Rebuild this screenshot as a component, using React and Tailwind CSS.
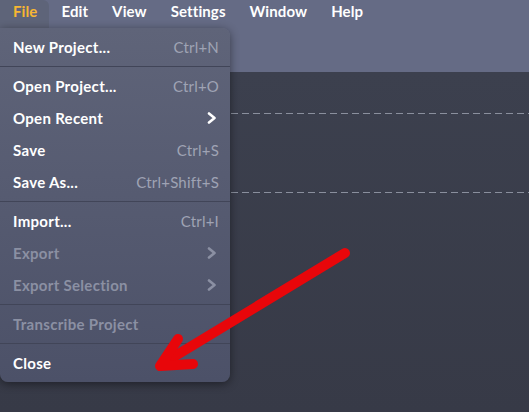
import React from 'react';

const menuBar = ['File', 'Edit', 'View', 'Settings', 'Window', 'Help'];

const items = [
  { label: 'New Project...', shortcut: 'Ctrl+N' },
  'sep',
  { label: 'Open Project...', shortcut: 'Ctrl+O' },
  { label: 'Open Recent', sub: true },
  { label: 'Save', shortcut: 'Ctrl+S' },
  { label: 'Save As...', shortcut: 'Ctrl+Shift+S' },
  'sep',
  { label: 'Import...', shortcut: 'Ctrl+I' },
  { label: 'Export', sub: true, disabled: true },
  { label: 'Export Selection', sub: true, disabled: true },
  'sep',
  { label: 'Transcribe Project', disabled: true },
  'sep',
  { label: 'Close' },
];

const Chevron = ({ disabled }) => (
  <svg width="10" height="12" viewBox="0 0 10 12" className={disabled ? 'text-[#8b90a3]' : 'text-white'}>
    <polyline points="2,1.5 7.5,6 2,10.5" fill="none" stroke="currentColor" strokeWidth="2.6" strokeLinecap="round" strokeLinejoin="round" />
  </svg>
);

const MenuItem = ({ item }) => (
  <div className="flex h-8 items-center justify-between pl-[13px] pr-[11px]">
    <span className={`text-[15px] font-bold tracking-[0.3px] ${item.disabled ? 'text-[#8b90a3]' : 'text-white'}`}>{item.label}</span>
    {item.shortcut && <span className="text-[15px] tracking-[0.2px] text-[#9fa3b4]">{item.shortcut}</span>}
    {item.sub && <span className="pr-[2px]"><Chevron disabled={item.disabled} /></span>}
  </div>
);

const Dashed = () => (
  <div className="h-px w-full bg-[repeating-linear-gradient(90deg,#8a8f9d_0_7px,transparent_7px_11px)]" />
);

export default function App() {
  return (
    <div className="relative flex h-[412px] w-[529px] flex-col overflow-hidden bg-[#3a3e4b] font-['Lato','Noto_Sans',sans-serif]">
      <div className="flex h-7 shrink-0 items-start bg-[#656b85]">
        {menuBar.map((m, i) => (
          <div
            key={m}
            className={
              i === 0
                ? 'h-7 rounded-tr-md bg-[#5e6479] pl-[13px] pr-3 pt-[1px] text-[15px] font-bold leading-5 tracking-[0.1px] text-[#f6b634]'
                : 'h-7 px-3 pt-[1px] text-[15px] font-bold leading-5 tracking-[0.1px] text-white'
            }
          >
            {m}
          </div>
        ))}
      </div>
      <div className="h-[44px] shrink-0 bg-[#656b85]" />
      <div className="flex-1 bg-gradient-to-b from-[#3c404e] to-[#373a47] pt-[41px]">
        <Dashed />
        <div className="h-[78px]" />
        <Dashed />
      </div>

      <div className="absolute left-0 top-7 w-[230px] rounded-tr-lg rounded-b-lg bg-gradient-to-b from-[#5f6479] to-[#4c5168] py-[3px] shadow-[0_2px_10px_rgba(0,0,0,0.45)]">
        {items.map((it, i) =>
          it === 'sep' ? (
            <div key={i} className="my-[3px] h-px bg-[#414558]" />
          ) : (
            <MenuItem key={i} item={it} />
          )
        )}
      </div>

      <svg className="pointer-events-none absolute left-0 top-0" width="529" height="412" viewBox="0 0 529 412">
        <g fill="none" stroke="#e8060a" strokeWidth="10" strokeLinecap="round" strokeLinejoin="round">
          <line x1="345" y1="253" x2="162" y2="364" />
          <polyline points="178,339 160,366 193,364" />
        </g>
      </svg>
    </div>
  );
}
